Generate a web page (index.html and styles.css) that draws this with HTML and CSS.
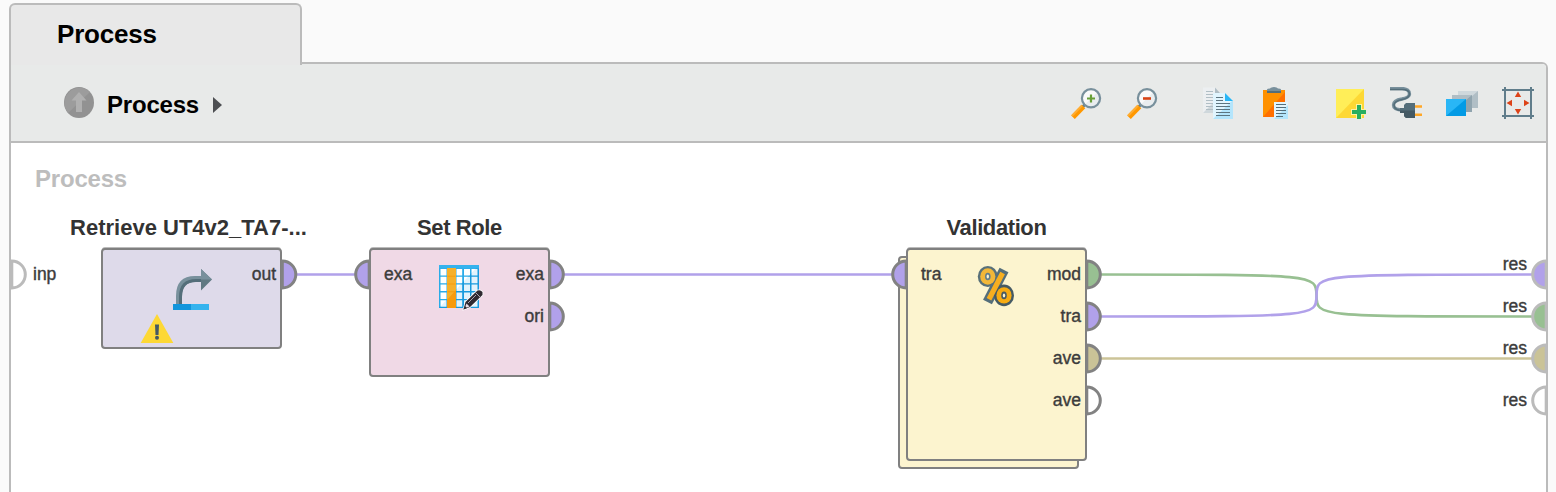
FILE: index.html
```html
<!DOCTYPE html>
<html lang="en">
<head>
<meta charset="utf-8">
<title>Process</title>
<link rel="stylesheet" href="styles.css">
</head>
<body>
<div class="tab">Process</div>
<main class="panel">
  <header class="toolbar">
    <nav class="crumbs">
      <svg class="up" width="30" height="31" viewBox="0 0 30 31"><ellipse cx="15" cy="15.5" rx="15" ry="15.5" fill="#929292"/><path d="M4 26A15 15.5 0 0 1 26 5Z" fill="#9c9c9c"/><path d="M15 5L22.500 13.500H18V25H12V13.500H7.500Z" fill="#b0b0b0"/></svg>
      <span>Process</span>
      <svg class="arrow" width="9" height="16" viewBox="0 0 9 16"><path d="M0 0L9 8L0 16Z" fill="#4d4f52"/></svg>
    </nav>
    <div class="tools">
      <div class="group">
        <svg class="icon" viewBox="0 0 32 32"><path d="M15.500 17L12 20.500" stroke="#657f8c" stroke-width="3"/><path d="M13.500 19.500L3 30.300" stroke="#ff9800" stroke-width="5"/><path d="M12 18.500L2 28.800" stroke="#ffad33" stroke-width="2"/><circle cx="21" cy="11.300" r="9.100" fill="#fafafa"/><path d="M14.500 17.800A9 9 0 0 0 27.500 5Z" fill="#e9edef"/><circle cx="21" cy="11.300" r="9.100" fill="none" stroke="#78909c" stroke-width="2.200"/><path d="M17 11.500H25M21 7.500V15.500" stroke="#689f38" stroke-width="2.200"/></svg>
        <svg class="icon" viewBox="0 0 32 32"><path d="M15.500 17L12 20.500" stroke="#657f8c" stroke-width="3"/><path d="M13.500 19.500L3 30.300" stroke="#ff9800" stroke-width="5"/><path d="M12 18.500L2 28.800" stroke="#ffad33" stroke-width="2"/><circle cx="21" cy="11.300" r="9.100" fill="#fafafa"/><path d="M14.500 17.800A9 9 0 0 0 27.500 5Z" fill="#e9edef"/><circle cx="21" cy="11.300" r="9.100" fill="none" stroke="#78909c" stroke-width="2.200"/><path d="M17 11.500H25" stroke="#d84315" stroke-width="2.600"/></svg>
      </div>
      <div class="group">
        <svg class="icon" viewBox="0 0 32 32"><path d="M1 .5H13L18 6V26H1Z" fill="#eceff1"/><path d="M1 26L18 9V26Z" fill="#cfd8dc"/><path d="M13 .5L18 6H13Z" fill="#b0bec5"/><path d="M4 4.500H11M4 7.500H11M4 10.500H11M4 13.500H11M4 16.500H11M4 19.500H11M4 22.500H11" stroke="#b0bec5"/><path d="M11 6H23L31 14V32H11Z" fill="#e1f5fe"/><path d="M11 32L31 13V32Z" fill="#b3e5fc"/><path d="M23 6L31 14H23Z" fill="#29b6f6"/><path d="M14 10.500H21M14 13.500H21M14 16.500H28M14 19.500H28M14 22.500H28M14 25.500H28M14 28.500H28" stroke="#5d7580"/></svg>
        <svg class="icon" viewBox="0 0 32 32"><path d="M5 3H27V30H5Z" fill="#ff9100"/><path d="M5 30L27 5V30Z" fill="#ff6f00"/><path d="M9 6V2.500Q9 1.500 12 1.500Q13 0 16 0T20 1.500Q23 1.500 23 2.500V6Z" fill="#78909c"/><path d="M9 4H23V6H9Z" fill="#546e7a"/><path d="M16 15H30V32H16Z" fill="#e1f5fe"/><path d="M16 32L30 18V32Z" fill="#b3e5fc"/><path d="M18 17.500H28M18 20.500H28M18 23.500H28M18 26.500H28M18 29.500H25" stroke="#546e7a"/></svg>
      </div>
      <div class="group">
        <svg class="icon" viewBox="0 0 32 32"><path d="M2 2H30V31H2Z" fill="#ffee58"/><path d="M2 31L30 2V31Z" fill="#fdd835"/><path d="M23 18H27V23H32V27H27V32H23V27H18V23H23Z" fill="#27ae60" stroke="#fff2a0" stroke-width="2" paint-order="stroke"/></svg>
        <svg class="icon" viewBox="0 0 32 32"><path d="M0 1.600H12C17 1.600 19.500 4 19.500 7C19.500 10 17 11 12 12C6 13 3.500 14.500 3.500 18C3.500 21.500 7 23 13 23" fill="none" stroke="#78909c" stroke-width="3.400"/><path d="M0 2.500H12C16 2.500 19.500 4 19.500 7C19.500 10 17 11.500 12 12.500C7 13.500 4 15 4 18C4 21 7 23.500 13 23.500" fill="none" stroke="#546e7a" stroke-width="1.600"/><path d="M25 16V31H16L14 29V26H10V21H14V18L16 16Z" fill="#546e7a"/><path d="M25 23.500V31H16L14 29V26H10V23.500Z" fill="#455a64"/><path d="M25 19.500H32M25 27.700H32" stroke="#ffa726" stroke-width="2.400"/></svg>
        <svg class="icon" viewBox="0 0 32 32"><path d="M12 4H32V21H12Z" fill="#cfd8dc"/><path d="M12 21L32 4V21Z" fill="#b0bec5"/><path d="M6 8H26V25H6Z" fill="#b0bec5"/><path d="M6 25L26 8V25Z" fill="#90a4ae"/><path d="M0 12H20V29H0Z" fill="#29b6f6"/><path d="M0 29L20 12V29Z" fill="#039be5"/></svg>
        <svg class="icon" viewBox="0 0 32 32"><path d="M3 0V32M29 0V32M0 3H32M0 29H32" stroke="#607d8b" stroke-width="2"/><path d="M16 4.500L19.200 10H12.800ZM16 27.500L19.200 22H12.800ZM4.500 16L10 12.800V19.200ZM27.500 16L22 12.800V19.200Z" fill="#dd4318"/></svg>
      </div>
    </div>
  </header>
  <section class="canvas">
    <h1 class="root-name">Process</h1>
    <svg class="wires" viewBox="11 143 1535 349">
      <g fill="none" stroke-width="2.600">
        <path d="M296 274.500H356M563 274.500H894" stroke="#b1a1ea"/>
        <path d="M1100 274.500C1316.500 274.500 1316.500 274.500 1316.500 295.500C1316.500 316.500 1316.500 316.500 1533 316.500" stroke="#98c092"/>
        <path d="M1100 316.500C1316.500 316.500 1316.500 316.500 1316.500 295.500C1316.500 274.500 1316.500 274.500 1533 274.500" stroke="#b1a1ea"/>
        <path d="M1100 358.500H1533" stroke="#ccc498"/>
      </g>
    </svg>
    <article class="node retrieve"><h2>Retrieve UT4v2_TA7-...</h2><div class="outs"><span>out</span></div></article>
    <article class="node role"><h2>Set Role</h2><div class="ins"><span>exa</span></div><div class="outs"><span>exa</span><span>ori</span></div></article>
    <div class="node-back"></div>
    <article class="node validation"><h2>Validation</h2><div class="ins"><span>tra</span></div><div class="outs"><span>mod</span><span>tra</span><span>ave</span><span>ave</span></div></article>
    <span class="inp">inp</span>
    <div class="results"><span>res</span><span>res</span><span>res</span><span class="open">res</span></div>
    <svg class="wires" viewBox="11 143 1535 349">
      <defs>
        <path id="out" d="M.3 -13.500A13.500 13.500 0 0 1 .3 13.500Z"/>
        <path id="in" d="M-.3 -13.500A13.500 13.500 0 0 0 -.3 13.500Z"/>
      </defs>
      <g stroke="#828282" stroke-width="3">
        <g fill="#b1a1ea">
          <use href="#out" x="282" y="274.500"/><use href="#in" x="369.500" y="274.500"/>
          <use href="#out" x="549.500" y="274.500"/><use href="#out" x="549.500" y="316.500"/>
          <use href="#in" x="906.500" y="274.500"/><use href="#out" x="1086.500" y="316.500"/>
        </g>
        <use href="#out" x="1086.500" y="274.500" fill="#98c092"/>
        <use href="#out" x="1086.500" y="358.500" fill="#cac397"/>
        <use href="#out" x="1086.500" y="400.500" fill="#fff"/>
      </g>
      <g stroke="#bbb" stroke-width="3">
        <use href="#out" x="11.500" y="274.500" fill="#fff"/>
        <use href="#in" x="1546.500" y="274.500" fill="#b1a1ea"/>
        <use href="#in" x="1546.500" y="316.500" fill="#98c092"/>
        <use href="#in" x="1546.500" y="358.500" fill="#cac397"/>
        <use href="#in" x="1546.500" y="400.500" fill="#fff"/>
      </g>
      <!-- retrieve -->
      <path d="M173 304H191V310H173Z" fill="#1295dc"/><path d="M191 304H209V310H191Z" fill="#35b3ee"/>
      <path d="M179 304V296Q179 279 195 279H202" fill="none" stroke="#78909c" stroke-width="6"/>
      <path d="M180.500 304V297Q180.500 280.500 196 280.500H202" fill="none" stroke="#546e7a" stroke-width="3"/>
      <path d="M201 269L212 279.500L201 290.500Z" fill="#607982"/><path d="M201 269L212 279.500H201Z" fill="#78909c"/>
      <path d="M157 314L173.300 343H140.700Z" fill="#fdd835"/>
      <path d="M155 324.500H159L158.500 335H155.500Z" fill="#455a64"/><circle cx="157" cy="337.800" r="2" fill="#455a64"/>
      <!-- set role -->
      <path d="M439 265H479V308H439Z" fill="#29abe8"/><path d="M439 308L479 265V308Z" fill="#1398dc"/><path d="M439 265H479V268.500H439Z" fill="#35b3ee"/>
      <g fill="#fff"><path id="cells" d="M440.500 269H446.500V275.500H440.500ZM456.500 269H462.200V275.500H456.500ZM464 269H470V275.500H464ZM471.500 269H477.500V275.500H471.500Z"/><use href="#cells" y="7.800"/><use href="#cells" y="15.600"/><use href="#cells" y="23.400"/><use href="#cells" y="31.200"/></g>
      <path d="M439 308L479 265V308Z" fill="#2aa8e8" opacity=".14"/>
      <path d="M447 268H456V308H447Z" fill="#f6b02a"/><path d="M447 300L456 290V308H447Z" fill="#f79a0c"/>
      <path d="M447.500 276.200H455.500M447.500 284H455.500M447.500 291.800H455.500M447.500 299.600H455.500" stroke="#f79a0c"/>
      <path d="M463.500 309.500L465.500 302L477.500 290.500Q480.500 289.500 482.500 292V295L470 307Z" fill="#2e2930" stroke="#fff" stroke-width="1.500" paint-order="stroke"/>
      <path d="M464.500 308.500L466.500 303.500L469.500 306.500Z" fill="#eadbe5"/><path d="M468 303L476 295M475.500 292.500L480.500 297.500" stroke="#b8b0ba" stroke-width=".9"/><path d="M463.500 309.500L465 306L467 308Z" fill="#2e2930"/>
      <!-- percent -->
      <g>
        <path d="M1004 270L987.500 302" stroke="#546e7a" stroke-width="10"/>
        <ellipse cx="987.800" cy="276.500" rx="10" ry="10.600" fill="#587079"/><ellipse cx="1004" cy="295.400" rx="10" ry="10.800" fill="#455a64"/>
        <path d="M1002.600 273L989 299.300" stroke="#f6ae20" stroke-width="5.200"/>
        <ellipse cx="987.800" cy="276.500" rx="7.600" ry="8.200" fill="#f2b738"/><ellipse cx="1004" cy="295.400" rx="7.600" ry="8.200" fill="#f6ab12"/>
        <ellipse cx="987.800" cy="276.500" rx="2.800" ry="3.800" fill="#607d8b"/><ellipse cx="1004" cy="295.400" rx="2.800" ry="3.800" fill="#455a64"/>
        <ellipse cx="987.800" cy="276.500" rx="1.200" ry="2" fill="#fdf4cf"/><ellipse cx="1004" cy="295.400" rx="1.200" ry="2" fill="#fdf4cf"/>
      </g>
    </svg>
  </section>
</main>
</body>
</html>
```
FILE: styles.css
```css
* { box-sizing: border-box; }
body { margin: 0; padding: 3px 8px 0 9px; height: 492px; overflow: hidden; display: flex; flex-direction: column; background: #fafafa; font-family: "Liberation Sans", Arial, sans-serif; }
h1, h2 { margin: 0; }
svg { display: block; flex: none; }
.tab { width: 293px; height: 62px; flex: none; position: relative; z-index: 1; padding: 14px 0 0 46px; border: 2px solid #bbb; border-bottom: 0; border-radius: 6px 6px 0 0; background: #e8e8e8; font-size: 26px; line-height: 30px; font-weight: bold; letter-spacing: -.2px; }
.panel { flex: none; width: 1539px; height: 440px; margin-top: -3px; border: 2px solid #bbb; border-radius: 0 6px 0 0; background: #fff; }
.toolbar { height: 79px; display: flex; align-items: center; justify-content: space-between; padding: 0 12px 0 53px; background: #e8eae9; border-bottom: 2px solid #bbb; border-radius: 0 4px 0 0; }
.crumbs { display: flex; align-items: center; font-size: 24px; font-weight: bold; line-height: 28px; }
.crumbs span { margin: 4px 0 0 13px; width: 93px; letter-spacing: -.2px; }
.crumbs .arrow { margin: 4px 0 0 13px; }
.tools { display: flex; gap: 44px; margin-top: 1px; }
.group { display: flex; gap: 24px; }
.icon { width: 32px; height: 32px; }
.canvas { position: relative; height: 349px; overflow: hidden; }
.root-name { padding: 22px 0 0 24px; font-size: 24px; line-height: 28px; color: #bdbdbd; letter-spacing: -.2px; }
.wires { position: absolute; left: 0; top: 0; width: 1535px; height: 349px; }
.node { position: absolute; top: 105px; width: 181px; display: flex; justify-content: space-between; border: 2px solid #808080; border-radius: 4px; box-shadow: 0 -2px 0 -1px #bbb; padding: 14px 4px 0 13px; }
.node h2 { position: absolute; top: -35px; left: -40px; right: -40px; text-align: center; white-space: nowrap; font-size: 22px; line-height: 26px; color: #333; letter-spacing: -.4px; }
.retrieve { left: 90px; height: 101px; background: #dedaea; justify-content: flex-end; }
.node.retrieve h2 { left: -43px; right: -37px; letter-spacing: 0; }
.role { left: 358px; height: 129px; background: #f0d9e6; }
.validation { left: 895px; height: 213px; background: #fcf4cf; }
.node-back { position: absolute; left: 887px; top: 113px; width: 181px; height: 213px; border: 2px solid #808080; border-radius: 4px; background: #fcf4cf; }
.ins, .outs, .results { display: flex; flex-direction: column; gap: 22px; }
.outs { text-align: right; }
.ins span, .outs span, .results span, .inp { font-size: 17.5px; line-height: 20px; color: #3c3c3c; -webkit-text-stroke: .4px #3c3c3c; }
.inp { position: absolute; left: 22px; top: 121px; }
.results { position: absolute; right: 19px; top: 111px; }
.results .open { margin-top: 10px; }
```
